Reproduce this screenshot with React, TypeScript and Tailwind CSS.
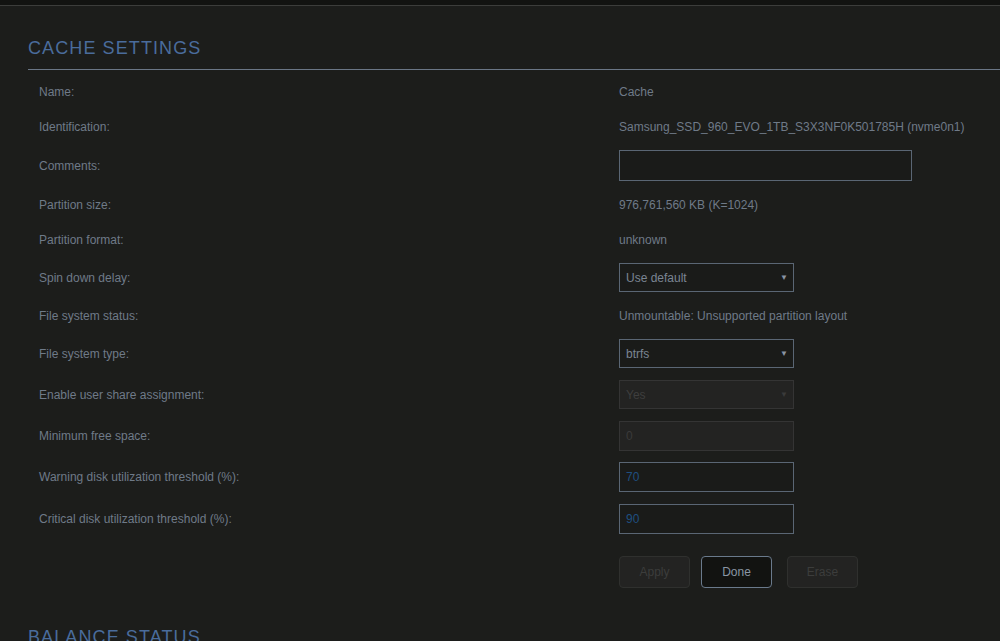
import React from 'react';

type Row =
  | { kind: 'text'; label: string; value: string }
  | { kind: 'input'; label: string; value: string; wide?: boolean; h: string; tone?: 'blue' | 'off' }
  | { kind: 'select'; label: string; value: string; off?: boolean };

const rows: Row[] = [
  { kind: 'text', label: 'Name:', value: 'Cache' },
  { kind: 'text', label: 'Identification:', value: 'Samsung_SSD_960_EVO_1TB_S3X3NF0K501785H (nvme0n1)' },
  { kind: 'input', label: 'Comments:', value: '', wide: true, h: 'h-[43px]' },
  { kind: 'text', label: 'Partition size:', value: '976,761,560 KB (K=1024)' },
  { kind: 'text', label: 'Partition format:', value: 'unknown' },
  { kind: 'select', label: 'Spin down delay:', value: 'Use default' },
  { kind: 'text', label: 'File system status:', value: 'Unmountable: Unsupported partition layout' },
  { kind: 'select', label: 'File system type:', value: 'btrfs' },
  { kind: 'select', label: 'Enable user share assignment:', value: 'Yes', off: true },
  { kind: 'input', label: 'Minimum free space:', value: '0', h: 'h-[41px]', tone: 'off' },
  { kind: 'input', label: 'Warning disk utilization threshold (%):', value: '70', h: 'h-[42px]', tone: 'blue' },
  { kind: 'input', label: 'Critical disk utilization threshold (%):', value: '90', h: 'h-[42px]', tone: 'blue' },
];

const Field = ({ row }: { row: Row }) => {
  if (row.kind === 'text') return <span>{row.value}</span>;
  if (row.kind === 'select') {
    return (
      <div
        className={`w-[175px] h-[29px] flex items-center justify-between pl-[6px] pr-[5px] border ${
          row.off ? 'bg-[#232322] border-[#343434] text-[#3e3e3e]' : 'bg-[#1a1b19] border-[#5a6674] text-[#7a8593]'
        }`}
      >
        <span>{row.value}</span>
        <span className={`text-[8px] ${row.off ? 'text-[#3a3a3a]' : 'text-[#8a95a3]'}`}>▼</span>
      </div>
    );
  }
  const tone =
    row.tone === 'blue'
      ? 'bg-[#1a1b19] border-[#5a6674] text-[#1f4f80]'
      : row.tone === 'off'
      ? 'bg-[#232322] border-[#343434] text-[#3a3a3a]'
      : 'bg-[#1a1b19] border-[#5a6674] text-[#7a8593]';
  return (
    <div className={`${row.wide ? 'w-[293px] h-[31px]' : 'w-[175px] h-[30px]'} flex items-center pl-[6px] border ${tone}`}>
      {row.value}
    </div>
  );
};

export default function App() {
  return (
    <div className="w-[1000px] h-[641px] overflow-hidden bg-[#1c1d1b] text-[12px] text-[#6f7a88] font-['Liberation_Sans',Arial,sans-serif]">
      <div className="h-[5px] bg-[#121311]" />
      <div className="h-[1px] bg-[#3c3d3b]" />
      <div className="pl-[28px]">
        <h2 className="mt-[30px] text-[18px] leading-[24px] tracking-[1.1px] text-[#4a6c9c]">CACHE SETTINGS</h2>
        <div className="mt-[9px] h-[1px] bg-[#6a7686]" />
        <div className="mt-[4px] pl-[11px]">
          {rows.map((row) => (
            <div
              key={row.label}
              className={`flex items-center ${
                row.kind === 'text' ? 'h-[35px]' : row.kind === 'select' ? 'h-[41px]' : row.h
              }`}
            >
              <div className="w-[580px] shrink-0">{row.label}</div>
              <Field row={row} />
            </div>
          ))}
          <div className="mt-[16px] pl-[580px] flex items-center">
            <button className="w-[71px] h-[32px] rounded-[4px] border border-[#2f302e] bg-[#232322] text-[#3c3d3c]">
              Apply
            </button>
            <button className="ml-[11px] w-[71px] h-[32px] rounded-[4px] border border-[#6a7a8c] bg-[#121311] text-[#8a96a4]">
              Done
            </button>
            <button className="ml-[15px] w-[71px] h-[32px] rounded-[4px] border border-[#2f302e] bg-[#232322] text-[#3c3d3c]">
              Erase
            </button>
          </div>
        </div>
        <h2 className="mt-[37px] text-[18px] leading-[24px] tracking-[1.1px] text-[#4a6c9c]">BALANCE STATUS</h2>
      </div>
    </div>
  );
}
